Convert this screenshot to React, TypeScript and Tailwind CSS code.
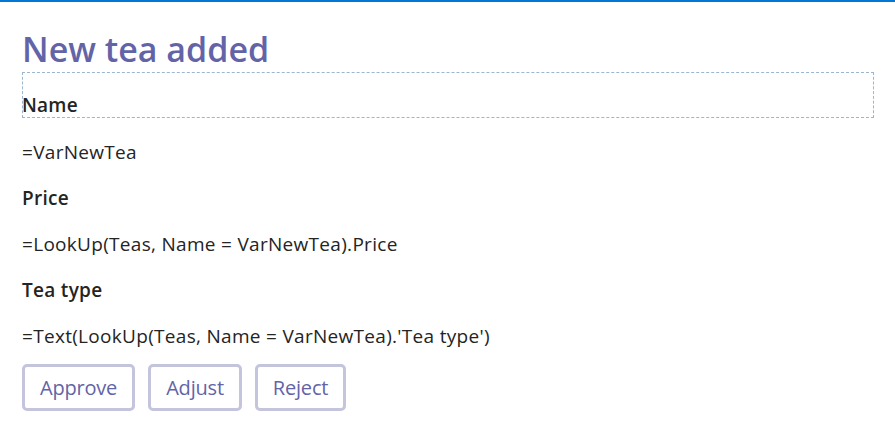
export default function App() {
    const font = {fontFamily: '"Open Sans", "Noto Sans", sans-serif'};

    return (
        <div className="w-[895px] h-[435px] bg-white border-t-2 border-[#0078d4] overflow-hidden" style={font}>
            <div className="pl-[22px] pr-[21px] pt-[25px]">
                <h1 className="text-[34px] leading-[45px] font-semibold text-[#6264a7]">New tea added</h1>
                <div className="h-[46px] border border-dashed border-[#9cb6d0] flex items-end">
                    <span className="text-[19px] leading-[24px] font-semibold text-[#242424] -ml-px tracking-[0.2px]">Name</span>
                </div>
                <div className="text-[19px] leading-[24px] text-[#242424] tracking-[0.3px]">
                    <p className="mt-[22px]">=VarNewTea</p>
                    <p className="mt-[22px] font-semibold">Price</p>
                    <p className="mt-[22px]">=LookUp(Teas, Name = VarNewTea).Price</p>
                    <p className="mt-[22px] font-semibold">Tea type</p>
                    <p className="mt-[22px]">=Text(LookUp(Teas, Name = VarNewTea).'Tea type')</p>
                </div>
                <div className="mt-[16px] flex gap-[13px]">
                    {["Approve", "Adjust", "Reject"].map((label) => (
                        <button
                            key={label}
                            className="h-[47px] px-[15px] rounded-[5px] border-[3px] border-[#c4c4dc] text-[20px] text-[#6264a7] bg-white tracking-[-0.2px]"
                        >
                            {label}
                        </button>
                    ))}
                </div>
            </div>
        </div>
    );
}
